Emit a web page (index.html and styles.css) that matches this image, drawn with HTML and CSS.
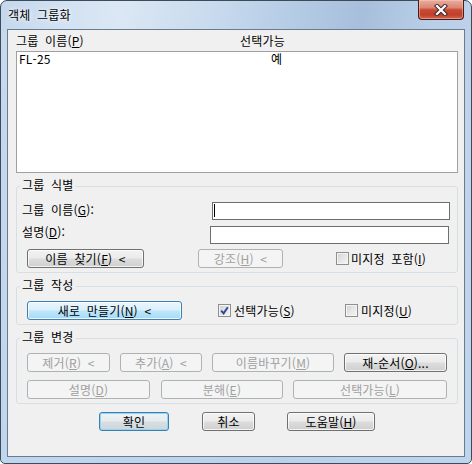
FILE: index.html
```html
<!DOCTYPE html>
<html lang="ko">
<head>
<meta charset="utf-8">
<title>객체 그룹화</title>
<link rel="stylesheet" href="styles.css">
</head>
<body>
<div class="window">
  <div class="titlebar">
    <span class="title">객체 그룹화</span>
    <div class="close">
      <svg width="14" height="12" viewBox="0 0 14 12">
        <path d="M3 2 L11 10 M11 2 L3 10" stroke="#3b2b2b" stroke-width="4.2" stroke-linecap="square" fill="none"/>
        <path d="M3 2 L11 10 M11 2 L3 10" stroke="#ffffff" stroke-width="2.2" stroke-linecap="square" fill="none"/>
      </svg>
    </div>
  </div>
  <div class="client">
    <div class="list-header">
      <span class="col1">그룹 이름(<u>P</u>)</span>
      <span class="col2">선택가능</span>
    </div>
    <div class="list">
      <div class="list-row"><span class="c1">FL-25</span><span class="c2">예</span></div>
    </div>

    <fieldset class="group">
      <legend>그룹 식별</legend>
      <div class="gbody g1">
        <div class="frow">
          <span class="flabel">그룹 이름(<u>G</u>):</span>
          <div class="input in1"><span class="caret"></span></div>
        </div>
        <div class="frow frow2">
          <span class="flabel fl2">설명(<u>D</u>):</span>
          <div class="input in2"></div>
        </div>
        <div class="brow brow-g1">
          <button class="btn w-find">이름 찾기(<u>F</u>) &lt;</button>
          <button class="btn disabled w-hl">강조(<u>H</u>) &lt;</button>
          <span class="cb cb-incl"><span class="box"></span><span class="cbt">미지정 포함(<u>I</u>)</span></span>
        </div>
      </div>
    </fieldset>

    <fieldset class="group">
      <legend>그룹 작성</legend>
      <div class="gbody g2">
        <div class="brow">
          <button class="btn hot w-new">새로 만들기(<u>N</u>) &lt;</button>
          <span class="cb cb-sel"><span class="box checked"><svg width="9" height="9" viewBox="0 0 9 9"><path d="M1.2 4.6 L3.6 7.4 L7.8 1.2" stroke="#2f4d94" stroke-width="2" fill="none"/></svg></span><span class="cbt">선택가능(<u>S</u>)</span></span>
          <span class="cb cb-un"><span class="box"></span><span class="cbt">미지정(<u>U</u>)</span></span>
        </div>
      </div>
    </fieldset>

    <fieldset class="group">
      <legend>그룹 변경</legend>
      <div class="gbody g3">
        <div class="brow">
          <button class="btn disabled w-rem">제거(<u>R</u>) &lt;</button>
          <button class="btn disabled w-add">추가(<u>A</u>) &lt;</button>
          <button class="btn disabled w-ren">이름바꾸기(<u>M</u>)</button>
          <button class="btn w-ord">재-순서(<u>O</u>)...</button>
        </div>
        <div class="brow brow-r2">
          <button class="btn disabled w-desc">설명(<u>D</u>)</button>
          <button class="btn disabled w-exp">분해(<u>E</u>)</button>
          <button class="btn disabled w-sel">선택가능(<u>L</u>)</button>
        </div>
      </div>
    </fieldset>

    <div class="brow bottom">
      <button class="btn default w-ok">확인</button>
      <button class="btn w-cancel">취소</button>
      <button class="btn w-help">도움말(<u>H</u>)</button>
    </div>
  </div>
</div>
</body>
</html>
```

FILE: styles.css
```css
html, body {
  margin: 0;
  padding: 0;
}

body {
  width: 472px;
  height: 464px;
  font-family: "Noto Sans CJK KR", "Noto Sans", sans-serif;
  font-size: 12px;
  word-spacing: 3px;
  letter-spacing: 0.2px;
  color: #000;
  background: #ffffff;
}

u {
  text-decoration: underline;
  text-underline-offset: 1px;
}

.window {
  box-sizing: border-box;
  position: relative;
  width: 472px;
  height: 464px;
  border: 1px solid #3d4a58;
  border-radius: 7px 7px 5px 5px;
  padding: 0 6px 6px;
  background:
    linear-gradient(180deg, rgba(255,255,255,0) 0%, rgba(190,212,238,0) 8%, rgba(190,212,238,0.55) 30%, rgba(188,212,238,0.9) 100%),
    linear-gradient(100deg, #c4d7ec 0%, #d2e2f2 12%, #dbe7f4 22%, #c9dbee 38%, #b3cae4 55%, #a7bfdc 66%, #b8cee7 78%, #c6d9ee 100%);
}

.titlebar {
  height: 28px;
  display: flex;
  align-items: center;
  padding-left: 1px;
}

.title {
  line-height: 14px;
  color: #000;
  text-shadow: 0 0 6px rgba(255,255,255,0.9), 0 0 3px rgba(255,255,255,0.8);
}

.close {
  position: absolute;
  top: -1px;
  left: 417px;
  box-sizing: border-box;
  width: 46px;
  height: 20px;
  border: 1px solid #4a1a14;
  border-top: none;
  border-radius: 0 0 4px 4px;
  background: linear-gradient(180deg, #e9ada0 0%, #dc8674 40%, #c84a35 52%, #bf3f2a 78%, #d2694f 100%);
  box-shadow: inset 0 0 0 1px rgba(255,210,200,0.45);
  display: flex;
  align-items: center;
  justify-content: center;
}

.client {
  box-sizing: border-box;
  height: 428px;
  border: 1px solid #6b7b8b;
  background: #f0f0f0;
  padding: 0 6px 0 8px;
}

.list-header {
  height: 21px;
  display: flex;
  align-items: center;
  line-height: 14px;
}

.list-header .col1 {
  width: 224px;
}

.list {
  box-sizing: border-box;
  height: 122px;
  border: 1px solid #a0a0a0;
  background: #ffffff;
  padding: 0 2px;
}

.list-row {
  display: flex;
  line-height: 13px;
}

.list-row .c1 {
  width: 252px;
}

.group {
  margin: 5px 0 0;
  padding: 0;
  border: 1px solid #d5dfe5;
  border-radius: 3px;
  min-width: 0;
}

.group legend {
  margin-left: 3px;
  padding: 0 2px 3px;
  line-height: 14px;
}

.gbody {
  padding-bottom: 4px;
}

.g1 { padding-top: 7px; }
.g2 { padding-top: 6px; }
.g3 { padding-top: 6px; }

.frow {
  display: flex;
  align-items: flex-start;
  height: 18px;
  padding-left: 5px;
}

.frow2 {
  margin-top: 6px;
}

.flabel {
  width: 189px;
  line-height: 14px;
  margin-top: 1px;
}

.fl2 {
  width: 188px;
  margin-top: -1px;
}

.input {
  box-sizing: border-box;
  height: 18px;
  border: 1px solid #6e6e6e;
  background: #ffffff;
  display: flex;
  align-items: flex-start;
  padding-left: 1px;
}

.in1 { width: 238px; margin-left: 1px; }
.in2 { width: 239px; }

.caret {
  width: 1px;
  height: 13px;
  margin-top: 1px;
  background: #000;
}

.brow {
  display: flex;
  align-items: center;
  padding-left: 10px;
}

.brow-g1 {
  margin-top: 5px;
}

.brow-r2 {
  margin-top: 8px;
}

.btn {
  box-sizing: border-box;
  height: 19px;
  margin: 0;
  padding: 0;
  border: 1px solid #707070;
  border-radius: 3px;
  font-family: inherit;
  font-size: 12px;
  word-spacing: 3px;
  letter-spacing: 0.2px;
  line-height: 17px;
  color: #000;
  text-align: center;
  white-space: nowrap;
  background: linear-gradient(180deg, #f2f2f2 0%, #ebebeb 48%, #dddddd 52%, #cfcfcf 100%);
  box-shadow: inset 0 0 0 1px rgba(255,255,255,0.75);
}

.btn.disabled {
  color: #a0a0a0;
  border-color: #adb2b5;
  background: #f4f4f4;
  box-shadow: none;
}

.btn.hot {
  border-color: #3c7fb1;
  background: linear-gradient(180deg, #eaf6fd 0%, #d9f0fc 48%, #bee6fd 52%, #a7d9f5 100%);
}

.btn.default {
  border-color: #3c7fb1;
  box-shadow: inset 0 0 0 1px #8fd6f7;
  background: linear-gradient(180deg, #eef2f4 0%, #e6ebee 48%, #d8dee2 52%, #cfd6da 100%);
}

.w-find { width: 117px; }
.w-hl { width: 85px; margin-left: 54px; }

.cb {
  display: inline-flex;
  align-items: center;
  line-height: 14px;
  white-space: nowrap;
}

.cb-incl { margin-left: 53px; }
.cb-sel { margin-left: 36px; width: 127px; }

.cbt {
  margin-left: 2px;
}

.cb-sel .cbt,
.cb-un .cbt {
  margin-left: 3px;
}

.box {
  box-sizing: border-box;
  flex: none;
  width: 13px;
  height: 13px;
  border: 1px solid #8e8f8f;
  background: linear-gradient(135deg, #d0d0d0 0%, #e4e4e4 45%, #f6f6f6 100%);
  box-shadow: inset 0 0 0 1px #f4f4f4;
  display: flex;
  align-items: center;
  justify-content: center;
}

.box.checked {
  background: linear-gradient(135deg, #cfcfcf 0%, #e8e8e8 60%, #f4f4f4 100%);
}

.w-new { width: 155px; }

.w-rem { width: 83px; }
.w-add { width: 82px; margin-left: 10px; }
.w-ren { width: 122px; margin-left: 10px; }
.w-ord { width: 103px; margin-left: 10px; }

.w-desc { width: 123px; }
.w-exp { width: 122px; margin-left: 11px; }
.w-sel { width: 154px; margin-left: 10px; }

.bottom {
  margin-top: 8px;
  padding-left: 0;
}

.w-ok { width: 70px; margin-left: 83px; }
.w-cancel { width: 53px; margin-left: 33px; }
.w-help { width: 88px; margin-left: 32px; }
```
